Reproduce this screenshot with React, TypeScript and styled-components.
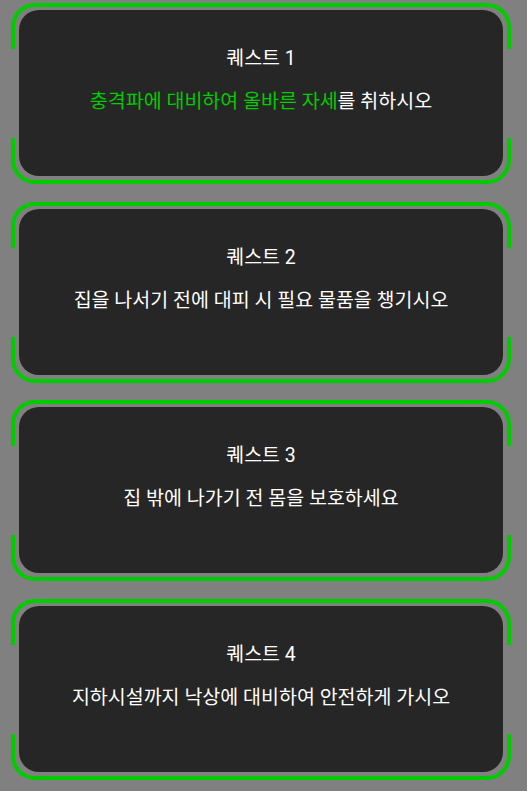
import React from 'react'
import styled, { createGlobalStyle } from 'styled-components'

const GlobalStyle = createGlobalStyle`
  html, body {
    margin: 0;
    padding: 0;
    background: #808080;
  }
  body {
    font-family: Roboto, "Noto Sans CJK KR", "Noto Sans", sans-serif;
  }
`

type Quest = {
  title: string
  highlight?: string
  rest: string
}

const quests: Quest[] = [
  { title: '퀘스트 1', highlight: '충격파에 대비하여 올바른 자세', rest: '를 취하시오' },
  { title: '퀘스트 2', rest: '집을 나서기 전에 대피 시 필요 물품을 챙기시오' },
  { title: '퀘스트 3', rest: '집 밖에 나가기 전 몸을 보호하세요' },
  { title: '퀘스트 4', rest: '지하시설까지 낙상에 대비하여 안전하게 가시오' },
]

const App: React.FC = () => {
  return (
    <>
      <GlobalStyle />
      <QuestList>
        {quests.map((q) => (
          <Frame key={q.title}>
            <Card>
              <Title>{q.title}</Title>
              <Description>
                {q.highlight && <Highlight>{q.highlight}</Highlight>}
                {q.rest}
              </Description>
            </Card>
          </Frame>
        ))}
      </QuestList>
    </>
  )
}

export default App

const QuestList = styled.div`
  display: flex;
  flex-direction: column;
  gap: 17.67px;
  padding: 3px 0 0 11px;
  width: 500px;
`

const Frame = styled.div`
  position: relative;
  box-sizing: border-box;
  height: 181px;
  border: 4px solid #00cc00;
  border-radius: 24px;
  padding: 3px 4px 4px 4px;

  &::before,
  &::after {
    content: '';
    position: absolute;
    top: 42px;
    width: 6px;
    height: 89px;
    background: #808080;
  }
  &::before {
    left: -5px;
  }
  &::after {
    right: -5px;
  }
`

const Card = styled.div`
  box-sizing: border-box;
  height: 100%;
  background: #262626;
  border-radius: 20px;
  padding-top: 36px;
  text-align: center;
  color: #ffffff;
`

const Title = styled.div`
  font-size: 19.5px;
  line-height: 26px;
  margin-bottom: 17px;
`

const Description = styled.div`
  font-size: 19.5px;
  line-height: 26px;
`

const Highlight = styled.span`
  color: #00cc00;
`
